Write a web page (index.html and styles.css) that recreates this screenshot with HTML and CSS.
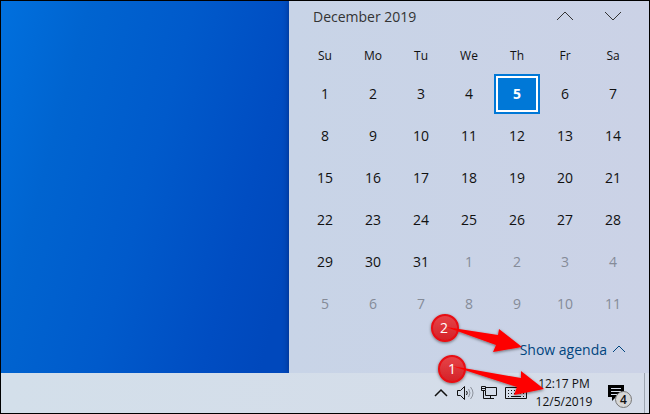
FILE: index.html
```html
<!DOCTYPE html>
<html lang="en">
<head>
<meta charset="utf-8">
<title>Calendar</title>
<link rel="stylesheet" href="styles.css">
</head>
<body>
<main class="desktop">
  <section class="calendar" aria-label="Calendar">
    <header class="month">
      <h1 class="month-title">December 2019</h1>
      <button class="nav" type="button" aria-label="Previous month"><svg width="18" height="10" viewBox="0 0 18 10"><path d="M1 9 9 1l8 8"/></svg></button>
      <button class="nav" type="button" aria-label="Next month"><svg width="18" height="10" viewBox="0 0 18 10"><path d="m1 1 8 8 8-8"/></svg></button>
    </header>
    <table class="days">
      <thead>
        <tr><th>Su</th><th>Mo</th><th>Tu</th><th>We</th><th>Th</th><th>Fr</th><th>Sa</th></tr>
      </thead>
      <tbody>
        <tr><td><button class="day">1</button></td><td><button class="day">2</button></td><td><button class="day">3</button></td><td><button class="day">4</button></td><td><button class="day today" aria-current="date">5</button></td><td><button class="day">6</button></td><td><button class="day">7</button></td></tr>
        <tr><td><button class="day">8</button></td><td><button class="day">9</button></td><td><button class="day">10</button></td><td><button class="day">11</button></td><td><button class="day">12</button></td><td><button class="day">13</button></td><td><button class="day">14</button></td></tr>
        <tr><td><button class="day">15</button></td><td><button class="day">16</button></td><td><button class="day">17</button></td><td><button class="day">18</button></td><td><button class="day">19</button></td><td><button class="day">20</button></td><td><button class="day">21</button></td></tr>
        <tr><td><button class="day">22</button></td><td><button class="day">23</button></td><td><button class="day">24</button></td><td><button class="day">25</button></td><td><button class="day">26</button></td><td><button class="day">27</button></td><td><button class="day">28</button></td></tr>
        <tr><td><button class="day">29</button></td><td><button class="day">30</button></td><td><button class="day">31</button></td><td><button class="day other">1</button></td><td><button class="day other">2</button></td><td><button class="day other">3</button></td><td><button class="day other">4</button></td></tr>
        <tr><td><button class="day other">5</button></td><td><button class="day other">6</button></td><td><button class="day other">7</button></td><td><button class="day other">8</button></td><td><button class="day other">9</button></td><td><button class="day other">10</button></td><td><button class="day other">11</button></td></tr>
      </tbody>
    </table>
    <button class="agenda" type="button">Show agenda
      <svg width="12" height="8" viewBox="0 0 12 8"><path d="m0 7 6-6 6 6"/></svg>
    </button>
  </section>
</main>
<footer class="taskbar">
  <button class="tray" type="button" aria-label="Show hidden icons"><svg width="18" height="16" viewBox="-2 0 18 16"><path class="thick" d="m1 11 6-6 6 6"/></svg></button>
  <button class="tray" type="button" aria-label="Volume"><svg width="18" height="16" viewBox="0 0 18 16"><path d="M1.500 5.500h3l4-4v13l-4-4h-3z"/><path d="M10.500 6q1.500 2 0 4"/><path class="soft" d="M12.500 4q3 4 0 8M14.500 2q5 6 0 12"/></svg></button>
  <button class="tray" type="button" aria-label="Network"><svg width="18" height="16" viewBox="0 0 18 16"><path d="M6 2.500h10.500v8H5.500V6M10.500 10.500v3M7 13.500h7M1.500 1.500h4v4h-4zM3.500 5.500v8H7M2 3.500h3"/></svg></button>
  <button class="tray" type="button" aria-label="Touch keyboard"><svg width="24" height="16" viewBox="0 0 24 16"><path d="M1.500 2.500h21v11h-21z"/><path stroke-dasharray="1 2" d="M4 5.500h17M4 8.500h17"/><path d="M4 11.500h1M7 11.500h10M19 11.500h1"/></svg></button>
  <button class="clock" type="button"><time>12:17 PM</time><time>12/5/2019</time></button>
  <button class="notifications" type="button" aria-label="4 notifications">
    <svg width="16" height="18" viewBox="0 0 16 18"><path class="fill" d="M0 1h16v12H8l-4 4v-4H0z"/><path class="lines" d="M3 4.500h10M3 7.500h10M3 10.500h6"/></svg>
    <span class="badge">4</span>
  </button>
  <button class="show-desktop" type="button" aria-label="Show desktop"></button>
</footer>
<svg class="callouts" width="130" height="100" viewBox="425 305 130 100" aria-hidden="true">
  <defs>
    <linearGradient id="disc" x1="0" y1="0" x2="0" y2="1"><stop offset="0" stop-color="#e64549"/><stop offset="1" stop-color="#d42127"/></linearGradient>
    <filter id="shadow" x="-20%" y="-20%" width="140%" height="150%"><feDropShadow dx="0" dy="1" stdDeviation="1.500" flood-opacity=".5"/></filter>
  </defs>
  <g filter="url(#shadow)">
    <circle class="disc" cx="445" cy="328" r="13"/>
    <path class="arrow" d="m446 327 52 8 1-6 23 18-29 5 3-7z"/>
  </g>
  <text class="step" x="444" y="333">2</text>
  <g filter="url(#shadow)">
    <circle class="disc" cx="452" cy="369" r="13"/>
    <path class="arrow" d="m452 366 69 12v-7l23 18-30 6 3-8z"/>
  </g>
  <text class="step" x="452" y="374">1</text>
</svg>
</body>
</html>
```
FILE: styles.css
```css
* { box-sizing: border-box; }

body {
  position: relative;
  display: grid;
  grid-template-rows: 1fr auto;
  min-height: 100vh;
  margin: 0;
  border: 1px solid #000;
  background: #d2dbe9;
  color: #111;
  font-family: "Segoe UI", "Open Sans", "Noto Sans", sans-serif;
  font-size: 14px;
}

button {
  margin: 0;
  padding: 0;
  border: 0;
  background: none;
  color: inherit;
  font: inherit;
}

svg { fill: none; stroke: currentColor; }

.desktop {
  display: flex;
  justify-content: flex-end;
  background: linear-gradient(105deg, #0070de 0%, #0064d0 12%, #005acb 26%, #004dc2 40%, #0048bc 48%);
}

.calendar {
  display: flex;
  flex-direction: column;
  width: 360px;
  padding: 0 12px;
  background: linear-gradient(90deg, #c8d4e7, #cbd2e6);
  box-shadow: 0 0 6px rgba(0, 0, 40, .4);
}

.month {
  display: flex;
  height: 36px;
  padding-bottom: 6px;
  align-items: center;
  color: #333;
}

.month-title {
  flex: 1;
  margin: 0;
  padding-left: 12px;
  font-size: 14px;
  font-weight: 400;
}

.nav {
  display: grid;
  width: 48px;
  height: 30px;
  place-items: center;
}

.days {
  width: 100%;
  border-collapse: collapse;
  table-layout: fixed;
}

th {
  height: 36px;
  padding: 0;
  font-size: 12px;
  font-weight: 400;
}

td { padding: 1px; }

.day {
  display: block;
  width: 100%;
  height: 40px;
  padding-bottom: 2px;
}

.today {
  border: 2px solid #0078d7;
  outline: 2px solid #fff;
  outline-offset: -4px;
  background: #0078d7;
  color: #fff;
  font-weight: 700;
}

.other { color: #858b98; }

.agenda {
  display: flex;
  height: 32px;
  align-self: flex-end;
  align-items: center;
  gap: 6px;
  margin-top: 8px;
  padding-right: 12px;
  color: #00457e;
}

.taskbar {
  display: flex;
  height: 40px;
  justify-content: flex-end;
  align-items: center;
  background: linear-gradient(90deg, #d3dfea, #d5dce9);
}

.tray {
  display: grid;
  margin-right: 6px;
  place-items: center;
}

.thick { stroke-width: 1.5; }

.soft { stroke: #8c929c; }

.clock {
  display: flex;
  width: 60px;
  flex-direction: column;
  font-size: 12px;
  line-height: 18px;
}

.clock time { text-align: center; }

.notifications {
  position: relative;
  display: grid;
  width: 16px;
  margin: 0 20px 0 14px;
}

.fill { fill: #000; stroke: none; }

.lines { stroke: #d5dce9; }

.badge {
  position: absolute;
  left: 7px;
  top: 7px;
  width: 17px;
  height: 17px;
  border: 1px solid #777;
  border-radius: 50%;
  background: #d6d6d6;
  font-size: 12px;
  font-weight: 600;
  line-height: 15px;
  text-align: center;
}

.show-desktop {
  width: 5px;
  height: 100%;
  border-left: 1px solid #9da5b1;
}

.callouts {
  position: absolute;
  right: 94px;
  bottom: 8px;
  pointer-events: none;
}

.disc { fill: url(#disc); stroke: #e80d12; stroke-width: 2; }

.arrow { fill: #fe0000; stroke: none; }

.step {
  fill: #fff;
  stroke: none;
  font-size: 14px;
  text-anchor: middle;
}
```
